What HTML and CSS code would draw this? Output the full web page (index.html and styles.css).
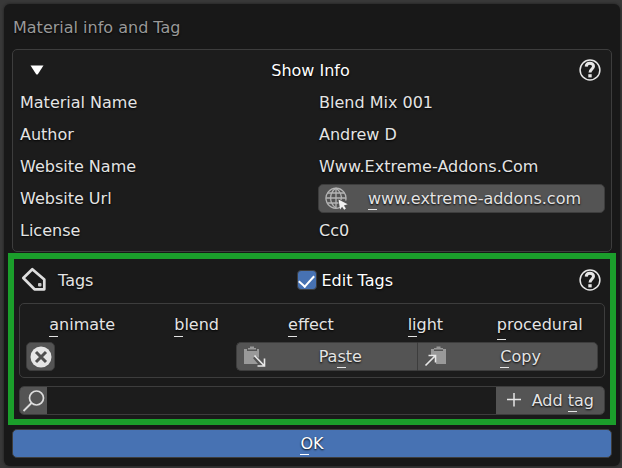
FILE: index.html
```html
<!DOCTYPE html>
<html lang="en">
<head>
<meta charset="utf-8">
<title>Material info and Tag</title>
<link rel="stylesheet" href="styles.css">
</head>
<body>
<main class="dialog">
  <h1 class="title">Material info and Tag</h1>

  <section class="box info">
    <header class="head">
      <button class="plain toggle" type="button" aria-label="Collapse">
        <svg width="14" height="10" viewBox="0 0 14 10"><path d="M.5 .5h13L8 9q-1 1-2 0z" fill="#fff"/></svg>
      </button>
      <h2 class="head-title">Show Info</h2>
      <button class="plain help" type="button" aria-label="Help">
        <svg width="22" height="22" viewBox="0 0 22 22" fill="none" stroke="#e6e6e6"><circle cx="11" cy="11" r="9.9" stroke-width="1.5"/><path d="M7.2 7.6C7.400 3.100 14.500 3.200 14.500 7.300C14.500 10.300 11 10 11 13.600" stroke-width="3"/><path d="M9.300 15.200h3.400v3.200H9.300z" fill="#e6e6e6" stroke="none"/></svg>
      </button>
    </header>
    <dl class="fields">
      <dt>Material Name</dt><dd>Blend Mix 001</dd>
      <dt>Author</dt><dd>Andrew D</dd>
      <dt>Website Name</dt><dd>Www.Extreme-Addons.Com</dd>
      <dt>Website Url</dt>
      <dd class="with-button">
        <a class="btn" href="#website">
          <svg class="btn-icon" width="24" height="24" viewBox="0 0 24 24" fill="none"><g stroke="#b4b4b4" stroke-width="1.3"><path d="M15 20.4A10 10 0 1 1 20.7 13.6"/><path d="M11 1C3.8 6 3.8 16 11 21M11 1c4.600 3.600 6 8 5 12M11 1v20M2.500 6h17M1 11h20M2.500 16h11"/></g><path d="M13.500 12.500l9.200 4.800-3.800 1.300 2 3-1.700 1.200-2.100-3-2 2.700z" fill="#f2f2f2"/></svg>
          <span class="btn-label"><span class="key">w</span>ww.extreme-addons.com</span>
        </a>
      </dd>
      <dt>License</dt><dd>Cc0</dd>
    </dl>
  </section>

  <section class="tags">
    <header class="head">
      <h2 class="tags-title">
        <svg width="26" height="26" viewBox="0 0 26 26" fill="none"><path d="M11.300 2.200L2.300 11L13.500 22.300H23.300V12.600z" stroke="#dedede" stroke-width="2.700" stroke-linejoin="round"/><rect x="17" y="16" width="3.500" height="3.500" rx="1" fill="#c4c4c4"/></svg>
        <span class="head-text">Tags</span>
      </h2>
      <label class="check"><input type="checkbox" checked><span class="head-text">Edit Tags</span></label>
      <button class="plain help" type="button" aria-label="Help about tags">
        <svg width="22" height="22" viewBox="0 0 22 22" fill="none" stroke="#e6e6e6"><circle cx="11" cy="11" r="9.9" stroke-width="1.5"/><path d="M7.2 7.6C7.400 3.100 14.500 3.200 14.500 7.300C14.500 10.300 11 10 11 13.600" stroke-width="3"/><path d="M9.300 15.200h3.400v3.200H9.300z" fill="#e6e6e6" stroke="none"/></svg>
      </button>
    </header>

    <div class="box tag-box">
      <div class="tag-list">
        <button class="plain" type="button"><span class="key">a</span>nimate</button>
        <button class="plain" type="button"><span class="key">b</span>lend</button>
        <button class="plain" type="button"><span class="key">e</span>ffect</button>
        <button class="plain" type="button"><span class="key">l</span>ight</button>
        <button class="plain" type="button"><span class="key low">p</span>rocedural</button>
      </div>
      <div class="actions">
        <button class="btn square" type="button" aria-label="Clear tags">
          <svg width="22" height="22" viewBox="0 0 22 22"><circle cx="11" cy="11" r="10.500" fill="#e6e6e6"/><path d="M6 6l10 10M16 6L6 16" stroke="#505050" stroke-width="3"/></svg>
        </button>
        <div class="pair">
          <button class="btn" type="button">
            <svg class="btn-icon" width="24" height="24" viewBox="0 0 24 24" fill="none"><path d="M1 4h3v2h10V4h2v9l-3-2-3 2 5 6H1z" fill="#999"/><path d="M5 3h2V1.500h4V3h2v1.500H5z" fill="#999"/><path d="M11.500 10.500L21 20.500M14.500 21H21.500V13.500" stroke="#e8e8e8" stroke-width="1.600"/></svg>
            <span class="btn-label">Pa<span class="key">s</span>te</span>
          </button>
          <button class="btn" type="button">
            <svg class="btn-icon" width="24" height="24" viewBox="0 0 24 24" fill="none"><path d="M7 4h3v2h9V4h3v15H12v-9H7z" fill="#999"/><path d="M10 3h2.500V1.500h4V3H19v1.500h-9z" fill="#999"/><path d="M1.500 20.500L11 11M4.500 10.500H11.500V17.500" stroke="#e8e8e8" stroke-width="1.600"/></svg>
            <span class="btn-label"><span class="key">C</span>opy</span>
          </button>
        </div>
      </div>
    </div>

    <form class="search">
      <label class="search-icon" for="tag-name" aria-label="Tag name">
        <svg width="24" height="24" viewBox="0 0 24 24" fill="none" stroke="#dedede"><circle cx="14.500" cy="9" r="7" stroke-width="1.700"/><path d="M9.500 14L1.500 22" stroke-width="1.800"/></svg>
      </label>
      <input id="tag-name" type="text">
      <button class="btn" type="button">
        <svg class="btn-icon" width="24" height="24" viewBox="0 0 24 24"><path d="M5 11.500h14M12 5v13.500" stroke="#e6e6e6" stroke-width="1.500"/></svg>
        <span class="btn-label">Add <span class="key">t</span>ag</span>
      </button>
    </form>
  </section>

  <button class="ok" type="button"><span class="key">O</span>K</button>
</main>
</body>
</html>
```
FILE: styles.css
```css
* { box-sizing: border-box; }

body {
  margin: 0;
  padding: 4px 2px 2px 4px;
  background: #383838;
  color: #e4e4e4;
  font: 16px/20px "DejaVu Sans", sans-serif;
  text-shadow: 0 1px 2px #000;
}

h1, h2, dl, dd { margin: 0; font-size: 16px; font-weight: normal; }
button, input { font: inherit; color: inherit; text-shadow: inherit; }
svg { display: block; flex: none; }

.dialog {
  padding: 0 8px 8px;
  background: #181818;
  border-radius: 6px;
  box-shadow: 0 0 3px #1c1c1c;
}

.title { padding: 14px 1px 11px; color: #999; }

.box {
  background: #1c1c1c;
  border: 1px solid #3d3d3d;
  border-radius: 5px;
}

.plain {
  display: flex;
  align-items: center;
  justify-content: center;
  height: 32px;
  padding: 0;
  border: 0;
  background: none;
}

.head {
  display: grid;
  grid-template-columns: 1fr auto 1fr;
  align-items: center;
  height: 32px;
}
.head-title { padding-top: 2px; color: #fff; }
.head-text { padding-top: 2px; }
.help { justify-self: end; }

.info { padding: 4px 6px 5px 7px; }
.info .head { padding: 0 4px 0 0; }
.toggle { justify-self: start; margin-left: 10px; }

.fields {
  display: grid;
  grid-template-columns: 298fr 287fr;
  grid-auto-rows: 32px;
  align-items: center;
}
.fields dt { padding-top: 2px; }
.fields dd { padding: 2px 0 0 1px; }
.fields .with-button { padding: 0; }
.fields .btn-label { padding-top: 2px; }

.btn {
  position: relative;
  display: flex;
  align-items: center;
  height: 29px;
  padding: 0 0 0 26px;
  background: #545454;
  border: 1px solid #3d3d3d;
  border-radius: 5px;
  color: inherit;
  text-decoration: none;
}
.btn-icon { position: absolute; left: 6px; top: 2px; }
.btn-label { flex: 1; text-align: center; }

.key { position: relative; }
.key::after {
  content: "";
  position: absolute;
  left: 0;
  bottom: -2px;
  width: 9px;
  height: 1px;
  background: currentColor;
}
.key.low::after { bottom: -5px; }

.tags {
  margin: 1px -4px 4px;
  padding: 5px 5px 4px;
  background: #1a1a1a;
  border: 6px solid #1b9e2b;
}
.tags .head {
  grid-template-columns: 276fr 283fr auto;
  margin-bottom: 7px;
  padding: 0 4px 0 2px;
}
.tags-title { display: flex; align-items: center; gap: 11px; }
.check { display: flex; align-items: center; gap: 5px; color: #fff; }
.check input {
  appearance: none;
  display: grid;
  justify-items: center;
  width: 20px;
  height: 20px;
  margin: 0;
  padding-top: 1px;
  background: #4772b3;
  border: 1px solid #3d3d3d;
  border-radius: 4px;
}
.check input:checked::before {
  content: "";
  width: 7px;
  height: 13px;
  border: solid #fff;
  border-width: 0 2px 2px 0;
  transform: rotate(42deg);
}

.tag-box { padding: 4px 6px 6px 6px; }
.tag-list {
  display: grid;
  grid-template-columns: repeat(5, 1fr);
  margin: 0 1px 2px -1px;
}
.tag-list .plain { padding-top: 2px; }
.actions { display: grid; grid-template-columns: 210fr 361fr; }
.square { width: 29px; padding: 0; justify-content: center; }
.pair { display: grid; grid-template-columns: 1fr 1fr; }
.pair .btn:first-child { border-radius: 5px 0 0 5px; border-right: 0; }
.pair .btn:last-child { border-radius: 0 5px 5px 0; }

.search {
  display: flex;
  height: 29px;
  margin-top: 8px;
  background: #1c1c1c;
  border: 1px solid #3d3d3d;
  border-radius: 5px;
  overflow: hidden;
}
.search-icon {
  display: flex;
  align-items: center;
  justify-content: center;
  width: 27px;
  background: #545454;
}
.search input {
  flex: 1;
  min-width: 0;
  padding: 0 8px;
  border: 0;
  background: none;
  outline: 0;
}
.search .btn {
  height: 27px;
  padding: 0 10px 0 36px;
  border: 0;
  border-radius: 0;
}
.search .btn-icon { top: 1px; }

.ok {
  display: block;
  width: 100%;
  height: 29px;
  padding: 0;
  color: #fff;
  background: #4772b3;
  border: 1px solid #3d3d3d;
  border-radius: 5px;
}
```
